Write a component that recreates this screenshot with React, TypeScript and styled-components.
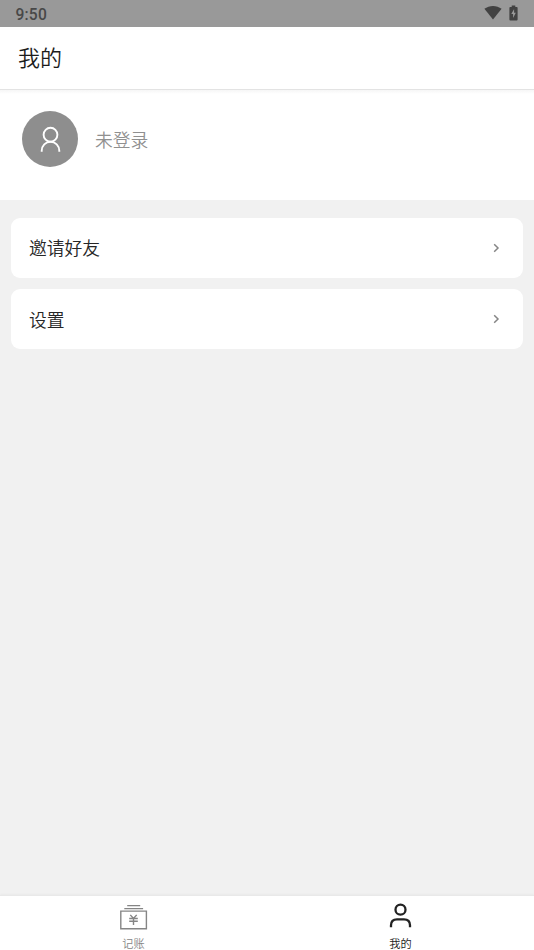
import React from "react";
import styled, { createGlobalStyle } from "styled-components";

const GlobalStyle = createGlobalStyle`
  * { box-sizing: border-box; }
  html, body { margin: 0; padding: 0; overflow: hidden; }
  body {
    font-family: Roboto, "Noto Sans CJK SC DemiLight", "Noto Sans CJK SC", sans-serif;
    font-weight: 350;
    background: #f1f1f1;
  }
`;

const Screen = styled.div`
  display: flex;
  flex-direction: column;
  height: 100vh;
  background: #f1f1f1;
`;

const StatusBar = styled.div`
  display: flex;
  align-items: center;
  justify-content: space-between;
  flex: none;
  height: 27px;
  padding: 1px 16px 0 15.5px;
  background: #999;
  color: #484848;
`;

const Clock = styled.span`
  padding-top: 1px;
  font-size: 15.6px;
  line-height: 26px;
  font-weight: 500;
  letter-spacing: 0.2px;
`;

const StatusIcons = styled.div`
  display: flex;
  align-items: center;
  gap: 7px;
  height: 100%;
  padding-bottom: 3px;
  svg { display: block; }
`;

const Header = styled.header`
  display: flex;
  align-items: center;
  flex: none;
  height: 63px;
  padding: 2px 18px 0;
  background: #fff;
  border-bottom: 1px solid #e3e3e3;
`;

const Title = styled.h1`
  margin: 0;
  font-size: 22px;
  line-height: 32px;
  font-weight: 350;
  color: #1c1c1c;
`;

const Profile = styled.section`
  display: flex;
  align-items: flex-start;
  flex: none;
  gap: 17px;
  height: 110px;
  padding: 21px 22px 0;
  background: linear-gradient(#f6f6f6, #fff 4px);
`;

const Avatar = styled.div`
  width: 56px;
  height: 56px;
  border-radius: 50%;
  background: #8e8e8e;
  svg { display: block; }
`;

const LoginState = styled.span`
  font-size: 17.8px;
  line-height: 60px;
  color: #909090;
`;

const Menu = styled.main`
  display: flex;
  flex: 1;
  flex-direction: column;
  gap: 11.5px;
  padding: 17.5px 11px;
`;

const MenuItem = styled.div`
  display: flex;
  align-items: center;
  justify-content: space-between;
  height: 60px;
  padding: 0 21px 0 18px;
  border-radius: 9px;
  background: #fff;
  color: #262626;
  font-size: 17.8px;
  svg { display: block; }
`;

const MenuLabel = styled.span`
  padding-bottom: 0.4px;
`;

const TabBar = styled.nav`
  display: flex;
  flex: none;
  height: 55px;
  background: #fff;
  border-top: 1px solid #e9e9e9;
  box-shadow: 0 -1px 2px rgba(0, 0, 0, 0.03);
`;

const Tab = styled.div<{ $active?: boolean }>`
  display: flex;
  flex: 1;
  flex-direction: column;
  align-items: center;
  padding-top: 6px;
  color: ${(p) => (p.$active ? "#222" : "#858585")};
  svg { display: block; flex: none; }
`;

const TabLabel = styled.span`
  margin-top: 5px;
  font-size: 11.2px;
  line-height: 16px;
`;

const Chevron = () => (
  <svg width="10" height="12" viewBox="0 0 10 12" fill="none" stroke="#858585" strokeWidth="1.5">
    <path d="M2.2 2.2L6 6 2.2 9.8" />
  </svg>
);

export default function App() {
  return (
    <>
      <GlobalStyle />
      <Screen>
        <StatusBar>
          <Clock>9:50</Clock>
          <StatusIcons>
            <svg width="18" height="15" viewBox="0 0 18 15" fill="#424242">
              <path d="M9 14.5L.4 3.8C5.2-.1 12.8-.1 17.6 3.8z" />
            </svg>
            <svg width="9" height="16" viewBox="0 0 9 16">
              <path d="M2.7.5h3.6v1.4h1.4q.9 0 .9.9v11.8q0 .9-.9.9H1.3q-.9 0-.9-.9V2.8q0-.9.9-.9h1.4z" fill="#424242" />
              <path d="M5.1 4L2.3 9h1.8v4l2.7-5.2H5.1z" fill="#999" />
            </svg>
          </StatusIcons>
        </StatusBar>
        <Header>
          <Title>我的</Title>
        </Header>
        <Profile>
          <Avatar>
            <svg width="56" height="56" viewBox="0 0 56 56" fill="none" stroke="#fff" strokeWidth="1.9">
              <circle cx="28.5" cy="23.7" r="6.9" />
              <path d="M19.7 40.8v-1a8.8 9 0 0 1 17.6 0v1" />
            </svg>
          </Avatar>
          <LoginState>未登录</LoginState>
        </Profile>
        <Menu>
          <MenuItem>
            <MenuLabel>邀请好友</MenuLabel>
            <Chevron />
          </MenuItem>
          <MenuItem>
            <MenuLabel>设置</MenuLabel>
            <Chevron />
          </MenuItem>
        </Menu>
        <TabBar>
          <Tab>
            <svg width="30" height="30" viewBox="0 0 30 30" fill="none" stroke="currentColor" strokeWidth="1.4">
              <path d="M8.2 3.6h13M5.3 6.6h18.8" />
              <path d="M1.8 9.1h25.6v17.6H1.8z" />
              <path d="M11.3 12.9l3.2 3.6 3.2-3.6M10.2 16.5h8.6M10.2 19.3h8.6M14.5 16.5v6.4" />
            </svg>
            <TabLabel>记账</TabLabel>
          </Tab>
          <Tab $active>
            <svg width="30" height="30" viewBox="0 0 30 30" fill="none" stroke="currentColor" strokeWidth="2.3">
              <circle cx="14.5" cy="7.7" r="5" />
              <path d="M5 25.3v-2q0-6 6-6h7q6 0 6 6v2" />
            </svg>
            <TabLabel>我的</TabLabel>
          </Tab>
        </TabBar>
      </Screen>
    </>
  );
}
